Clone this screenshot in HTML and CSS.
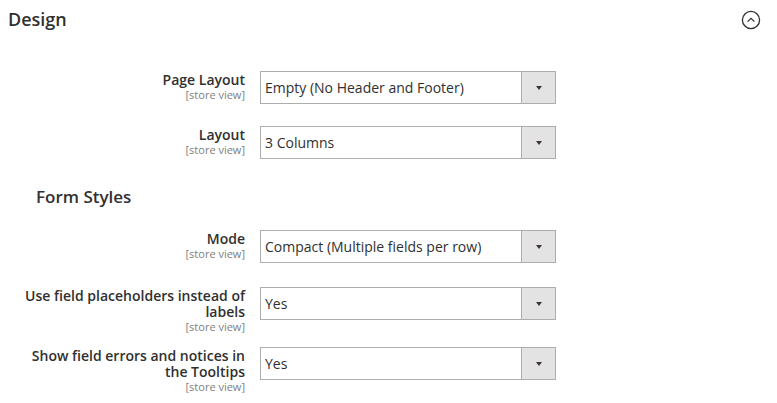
FILE: index.html
```html
<!DOCTYPE html>
<html>
<head>
<meta charset="utf-8">
<link rel="stylesheet" href="styles.css">
</head>
<body>
<section class="section">
  <header class="section-head">
    <h2 class="section-title">Design</h2>
    <span class="toggle">
      <svg width="20" height="20" viewBox="0 0 20 20"><circle cx="10" cy="10" r="8.6" fill="none" stroke="#303030" stroke-width="1.3"/><path d="M6.6 11.6 L10 8.4 L13.4 11.6" fill="none" stroke="#303030" stroke-width="1.3"/></svg>
    </span>
  </header>

  <div class="fields">
    <div class="row">
      <div class="label"><span class="label-text">Page Layout</span><span class="scope">[store view]</span></div>
      <div class="select"><span class="value">Empty (No Header and Footer)</span><span class="arrow"><i class="tri"></i></span></div>
    </div>
    <div class="row">
      <div class="label"><span class="label-text">Layout</span><span class="scope">[store view]</span></div>
      <div class="select"><span class="value">3 Columns</span><span class="arrow"><i class="tri"></i></span></div>
    </div>

    <h3 class="group-title">Form Styles</h3>

    <div class="row row-mode">
      <div class="label"><span class="label-text">Mode</span><span class="scope">[store view]</span></div>
      <div class="select"><span class="value">Compact (Multiple fields per row)</span><span class="arrow"><i class="tri"></i></span></div>
    </div>
    <div class="row row-tall">
      <div class="label"><span class="label-text">Use field placeholders instead of labels</span><span class="scope">[store view]</span></div>
      <div class="select"><span class="value">Yes</span><span class="arrow"><i class="tri"></i></span></div>
    </div>
    <div class="row">
      <div class="label"><span class="label-text">Show field errors and notices in the Tooltips</span><span class="scope">[store view]</span></div>
      <div class="select"><span class="value">Yes</span><span class="arrow"><i class="tri"></i></span></div>
    </div>
  </div>
</section>
</body>
</html>
```

FILE: styles.css
```css
* { box-sizing: border-box; }
html, body { margin: 0; padding: 0; background: #fff; }
body {
  font-family: "Open Sans", "Liberation Sans", sans-serif;
  color: #303030;
  width: 777px;
  height: 403px;
  overflow: hidden;
}
.section-head {
  display: flex;
  justify-content: space-between;
  align-items: center;
  padding: 7px 16px 0 8px;
}
.section-title {
  margin: 0;
  font-size: 18px;
  line-height: 24px;
  font-weight: 600;
  color: #303030;
}
.toggle {
  display: flex;
  width: 20px;
  height: 20px;
  margin-top: 2px;
}
.fields {
  display: flex;
  flex-direction: column;
  padding-top: 40px;
  padding-left: 21px;
}
.row {
  display: grid;
  grid-template-columns: 224px 296px;
  column-gap: 15px;
  align-items: start;
  margin-bottom: 22px;
}
.row-mode { margin-bottom: 24px; }
.row-tall { margin-bottom: 13px; }
.label {
  display: flex;
  flex-direction: column;
  align-items: flex-end;
  text-align: right;
  padding-top: 1px;
}
.label-text {
  font-size: 14px;
  line-height: 16px;
  font-weight: 600;
  color: #303030;
}
.scope {
  font-size: 11px;
  line-height: 14px;
  color: #808080;
}
.select {
  display: flex;
  height: 33px;
  border: 1px solid #adadad;
  background: #fff;
}
.value {
  flex: 1;
  display: flex;
  align-items: center;
  padding-left: 4px;
  font-size: 14px;
  color: #303030;
  white-space: nowrap;
}
.arrow {
  width: 34px;
  border-left: 1px solid #adadad;
  background: #e3e3e3;
  display: flex;
  align-items: center;
  justify-content: center;
}
.tri {
  display: block;
  width: 0;
  height: 0;
  border-left: 3.5px solid transparent;
  border-right: 3.5px solid transparent;
  border-top: 4px solid #41362f;
}
.group-title {
  margin: 4px 0 22px 0;
  padding-left: 15px;
  font-size: 17px;
  line-height: 23px;
  font-weight: 600;
  color: #303030;
}
```
